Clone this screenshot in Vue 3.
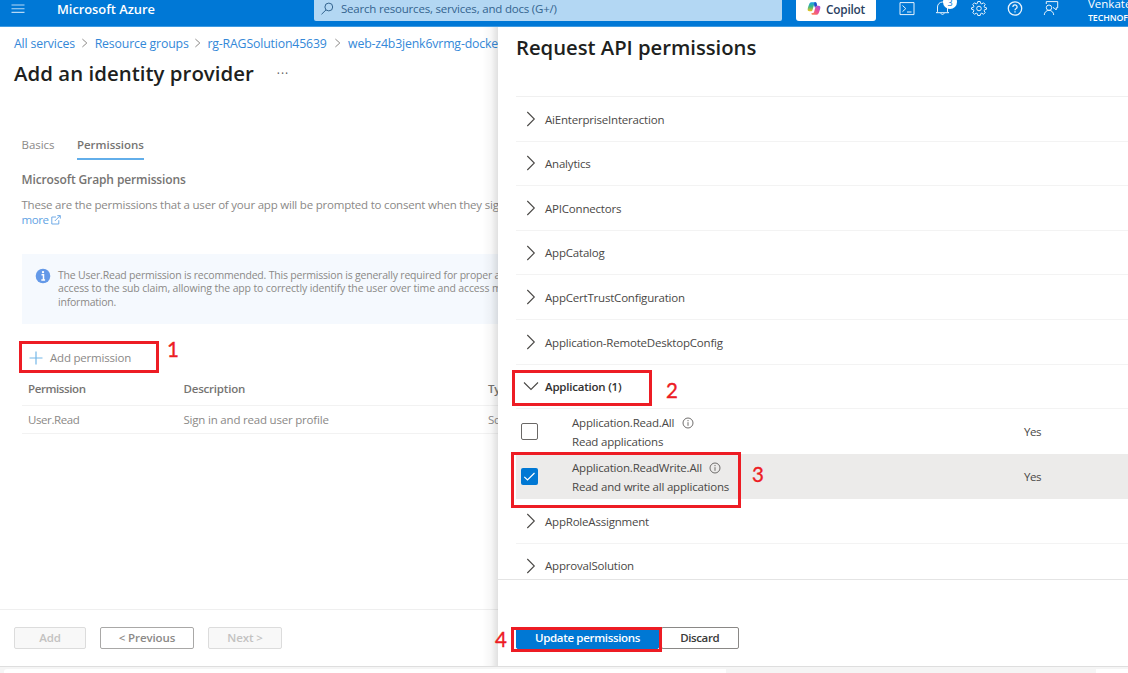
<script setup>
const crumbs = ['All services', 'Resource groups', 'rg-RAGSolution45639', 'web-z4b3jenk6vrmg-docker']
const before = ['AiEnterpriseInteraction', 'Analytics', 'APIConnectors', 'AppCatalog', 'AppCertTrustConfiguration', 'Application-RemoteDesktopConfig']
const after = ['AppRoleAssignment', 'ApprovalSolution']
const scopes = [
  { name: 'Application.Read.All', desc: 'Read applications', on: false },
  { name: 'Application.ReadWrite.All', desc: 'Read and write all applications', on: true },
]
</script>

<template>
  <div class="portal">
    <header class="bar">
      <svg class="burger" width="14" height="10" viewBox="0 0 14 10"><path d="M.5 1h13M.5 4.700h13M.5 8.400h13" /></svg>
      <div class="brand">Microsoft Azure</div>
      <div class="search">
        <svg width="14" height="14" viewBox="0 0 14 14"><circle cx="7.800" cy="5" r="3.900" /><path d="M5 7.900 .5 12.300" /></svg>
        <span>Search resources, services, and docs (G+/)</span>
      </div>
      <div class="copilot">
        <svg width="14" height="13" viewBox="0 0 14 13">
          <defs>
            <linearGradient id="cpa" x1="0" y1="0" x2="0" y2="1"><stop offset="0" stop-color="#18a0e8" /><stop offset=".5" stop-color="#42b883" /><stop offset="1" stop-color="#f5c518" /></linearGradient>
            <linearGradient id="cpb" x1="1" y1="0" x2="0" y2="1"><stop offset="0" stop-color="#9a55ee" /><stop offset=".5" stop-color="#ee5090" /><stop offset="1" stop-color="#ff8a45" /></linearGradient>
          </defs>
          <path d="M9.800 1.400C9.500.5 9 .2 8.200.2H4.400C2.800.2 2.300 1.600 1.500 4 .7 6.300-.3 9.300 2.400 9.300h1.400c1 0 1.500-.6 1.800-1.600l1.200-4.100c.3-1.100.8-1.600 1.700-1.600z" fill="url(#cpa)" />
          <path d="M4.200 11.600c.3.9.8 1.200 1.600 1.200h3.800c1.600 0 2.100-1.400 2.900-3.800.8-2.300 1.800-5.300-.9-5.300h-1.400c-1 0-1.500.6-1.800 1.600L7.200 9.400C6.900 10.500 6.400 11 5.500 11z" fill="url(#cpb)" />
          <path d="M7.500.2c1.500 0 2 .6 2.300 1.700l.4 1.800C8.700 3.700 8.500 5 8.100 6L7 3z" fill="#1c50c8" />
        </svg>
        <span>Copilot</span>
      </div>
      <div class="tools">
        <svg width="16" height="20" viewBox="0 0 16 20"><path d="M1 2.600h14v12H1zM3.500 5.500l3.300 3.100-3.300 3.100M8 12h4.500" /></svg>
        <div class="bell">
          <svg width="16" height="20" viewBox="0 0 16 20"><path d="M2.500 11.800V7a5 5 0 0 1 10 0v4.800l1.300.9H1.200zM5.800 13.200a1.800 1.800 0 0 0 3.400 0" /></svg>
          <span class="badge">3</span>
        </div>
        <svg width="16" height="20" viewBox="0 0 16 20"><circle cx="8" cy="8.500" r="2.300" /><path d="M6.800 1.500h2.400l.4 1.900 1.200.5 1.700-1.100 1.700 1.700-1.100 1.700.5 1.200 1.900.4v1.400l-1.900.5-.5 1.200 1.100 1.700-1.700 1.700-1.700-1.100-1.200.5-.4 1.800H6.800l-.4-1.800-1.200-.5-1.700 1.100-1.700-1.700 1.100-1.700-.5-1.200L.5 9.200V7.800l1.900-.4.5-1.200-1.100-1.700 1.700-1.700 1.700 1.100 1.200-.5z" /></svg>
        <svg width="16" height="20" viewBox="0 0 16 20"><circle cx="8" cy="8.500" r="6.700" stroke-width="1.300" /><path d="M5.900 6.900a2.100 2 0 1 1 3.300 1.600C8.400 9 8 9.300 8 10.200M8 11.300v1.200" stroke-width="1.300" /></svg>
        <svg width="16" height="20" viewBox="0 0 16 20"><circle cx="6" cy="7.700" r="2.700" /><path d="M1.300 15a4.700 4.700 0 0 1 9.400 0M3.300 4V1.600h11.400v6.200h-1.500v2.200l-2.200-2.200H10" /></svg>
      </div>
      <div class="account"><div class="user">Venkatesh</div><div class="org">TECHNOFORTE</div></div>
    </header>

    <div class="stage">
      <main class="page">
        <nav class="crumbs">
          <template v-for="(c, i) in crumbs" :key="c">
            <svg v-if="i" width="19.700" height="10" viewBox="0 0 20 10"><path d="m7.500 1 4.500 4-4.500 4" /></svg>
            <a :class="'crumb c' + i">{{ c }}</a>
          </template>
        </nav>
        <div class="heading"><h1>Add an identity provider</h1><span>···</span></div>
        <div class="form">
          <div class="tabs"><span class="tab">Basics</span><span class="tab on">Permissions</span></div>
          <h2>Microsoft Graph permissions</h2>
          <p class="lead">These are the permissions that a user of your app will be prompted to consent when they sign<br /><a>more <svg width="10" height="10" viewBox="0 0 10 10"><path d="M5 2H.8v7h7V5.200M3.800 6 9 .8M6.300.6h3v3" /></svg></a></p>
          <div class="note">
            <svg width="16" height="16" viewBox="0 0 16 16"><circle cx="8" cy="8" r="7.300" fill="#6499e8" /><path d="M6.500 6.700h2v5M6.300 11.900h3.800" stroke="#fff" stroke-width="1.500" fill="none" /><circle cx="8" cy="4.100" r="1.200" fill="#fff" /></svg>
            <p><span class="l1">The User.Read permission is recommended. This permission is generally required for proper app</span><br /><span class="l2">access to the sub claim, allowing the app to correctly identify the user over time and access more</span><br /><span class="tight">information.</span></p>
          </div>
          <div class="add"><svg width="14" height="14" viewBox="0 0 14 14"><path d="M7 .5v13M.5 7h13" /></svg><span>Add permission</span></div>
          <div class="grid head"><span class="first">Permission</span><span>Description</span><span>Type</span></div>
          <div class="grid row"><span class="ur">User.Read</span><span>Sign in and read user profile</span><span>Scope</span></div>
        </div>
        <footer class="pagefoot"><div class="btn off w1">Add</div><div class="btn w2">&lt; Previous</div><div class="btn off w3">Next &gt;</div></footer>
      </main>

      <aside class="panel">
        <h1>Request API permissions</h1>
        <div class="list">
          <div v-for="g in before" :key="g" class="group"><svg width="16" height="16" viewBox="0 0 16 16"><path d="m4.300 1 7 7-7 7" /></svg><span>{{ g }}</span></div>
          <div class="group open"><svg width="16" height="16" viewBox="0 0 16 16"><path d="m1 4.500 7 7 7-7" /></svg><span>Application (1)</span></div>
          <div v-for="s in scopes" :key="s.name" class="scope" :class="{ sel: s.on }">
            <div class="check"><svg v-if="s.on" width="17" height="17" viewBox="0 0 17 17"><path d="m3.300 8.800 3.200 3.200 7-7" /></svg></div>
            <div class="info">
              <div class="name"><span>{{ s.name }}</span><svg width="12" height="12" viewBox="0 0 12 12"><circle cx="6" cy="6" r="5" /><path d="M6 5.200v3.600M6 3v1.200" /></svg></div>
              <div>{{ s.desc }}</div>
            </div>
            <div class="yes">Yes</div>
          </div>
          <div v-for="g in after" :key="g" class="group"><svg width="16" height="16" viewBox="0 0 16 16"><path d="m4.300 1 7 7-7 7" /></svg><span>{{ g }}</span></div>
        </div>
        <footer class="panelfoot"><div class="btn primary">Update permissions</div><div class="btn discard">Discard</div></footer>
      </aside>
    </div>
    <div class="strip"><div class="a"></div><div class="b"></div><div class="c"></div></div>

    <div class="mark m1"></div><div class="num n1">1</div>
    <div class="mark m2"></div><div class="num n2">2</div>
    <div class="mark m3"></div><div class="num n3">3</div>
    <div class="mark m4"></div><div class="num n4">4</div>
  </div>
</template>

<style>
body { overflow: hidden; }
</style>
<style scoped>
* { box-sizing: border-box; }
h1, h2, p { margin: 0; }
svg { display: block; flex: none; fill: none; }
.portal { position: relative; width: 1128px; height: 673px; overflow: hidden; background: #fff; font: 400 11.5px/16px "Open Sans", "Noto Sans", sans-serif; letter-spacing: -.2px; color: #4a4846; white-space: nowrap; display: flex; flex-direction: column; }

.bar { height: 27px; flex: none; display: flex; align-items: flex-start; background: #0078d6; border-bottom: 1px solid #3f9be2; color: #fff; overflow: hidden; }
.burger { margin: 4px 0 0 11px; stroke: #b5d8f5; stroke-width: 1.100; }
.brand { margin: 1px 0 0 32px; width: 257px; font-size: 12.9px; font-weight: 600; letter-spacing: -.04px; }
.search { width: 468px; height: 21px; background: #b3d7f3; border-radius: 0 0 2px 2px; display: flex; color: #33648f; line-height: 17px; }
.search svg { margin: 2px 6px 0 7px; stroke: #33648f; stroke-width: 1; }
.copilot { margin-left: 14px; width: 80px; height: 21px; background: #fff; border-radius: 0 0 3px 3px; display: flex; color: #2a3f5f; line-height: 18px; font-size: 11.8px; font-weight: 600; }
.copilot svg { margin: 2px 5px 0 11px; }
.tools { margin-left: 23px; display: flex; gap: 20px; }
.tools svg { stroke: #e8f3fc; stroke-width: 1; stroke-linejoin: round; }
.bell { position: relative; }
.badge { position: absolute; left: 8px; top: -5px; width: 14px; height: 14px; border-radius: 7px; background: #fff; color: #0078d4; font-size: 9px; line-height: 15px; text-align: center; letter-spacing: 0; }
.account { margin-left: 29px; margin-top: -4px; width: 40px; overflow: hidden; }
.user { height: 15px; letter-spacing: 0; }
.org { font-size: 8.8px; font-weight: 600; line-height: 14px; letter-spacing: -.1px; }

.stage { flex: none; height: 640px; display: flex; border-bottom: 1px solid #dedede; }
.page { position: relative; width: 498px; overflow: hidden; display: flex; flex-direction: column; }
.page::after { content: ""; position: absolute; right: 0; top: 0; bottom: 0; width: 16px; background: linear-gradient(to right, rgba(0,0,0,0), rgba(0,0,0,.03) 55%, rgba(0,0,0,.12)); }
.crumbs { height: 32px; padding-left: 14px; display: flex; align-items: center; font-size: 12.3px; letter-spacing: -.16px; color: #3488d8; }
.crumb { flex: none; margin-top: 1px; }
.c0 { width: 61px; } .c1 { width: 93px; } .c2 { width: 121px; }
.crumbs svg { stroke: #8a8886; }
.heading { height: 28px; padding-left: 14px; display: flex; align-items: center; color: #1f1e1d; }
h1 { font-size: 20.4px; font-weight: 600; line-height: 28px; letter-spacing: .03px; color: #201f1e; }
.heading h1 { margin-top: -1px; }
.heading span { margin: 1px 0 0 23px; letter-spacing: .9px; font-size: 12px; color: #605e5c; }
.form { padding: 48px 0 0 22px; height: 522px; color: #8b8987; flex: none; }
.tabs { display: flex; gap: 22.500px; margin-left: -.5px; }
.tab { height: 25px; line-height: 19px; letter-spacing: -.05px; }
.tab.on { width: 67px; font-weight: 600; color: #767472; border-bottom: 2px solid #62aeea; letter-spacing: -.02px; }
h2 { margin: 12px 0 0 -.5px; font-size: 12px; font-weight: 600; line-height: 16px; color: #767472; letter-spacing: -.12px; }
.lead { margin: 9px 0 0 -.5px; line-height: 15px; letter-spacing: -.21px; }
.lead a { display: flex; align-items: center; gap: 2px; color: #62a3e4; letter-spacing: -.4px; }
.lead svg { stroke: #62a3e4; stroke-width: .9; }
.note { margin-top: 26.500px; height: 70px; background: #f5f9fe; padding: 14px 0 0 13px; display: flex; font-size: 10.5px; line-height: 13.600px; letter-spacing: -.165px; }
.note p { margin: 1px 0 0 7px; }
.l1 { letter-spacing: -.2px; }
.l2 { letter-spacing: -.14px; }
.tight { letter-spacing: -.22px; }
.add { margin-top: 19.500px; height: 30px; padding-left: 7px; display: flex; align-items: center; }
.add span { margin-left: 7px; }
.add svg { stroke: #74b7e8; stroke-width: 1.200; }
.grid { display: grid; grid-template-columns: 155.500px 304.500px 60px; padding-left: 6px; border-bottom: 1px solid #f2f2f2; }
.head { margin-top: 1px; height: 32px; line-height: 30px; font-weight: 600; color: #767472; }
.head .first { letter-spacing: -.4px; }
.row { height: 28px; line-height: 28px; }
.ur { letter-spacing: -.4px; }
.pagefoot { height: 57px; border-top: 1px solid #efefef; padding: 17px 0 0 14px; display: flex; gap: 14px; }
.btn { height: 22px; line-height: 19px; border: 1px solid #a9a8a7; border-radius: 2px; text-align: center; font-weight: 600; color: #8b8987; letter-spacing: -.1px; }
.btn.off { background: #f8f8f8; border-color: #dcdcdc; color: #c3c2c1; }
.w1 { width: 72px; } .w2 { width: 94px; } .w3 { width: 74px; }

.panel { width: 630px; padding-left: 18px; display: flex; flex-direction: column; background: #fff; position: relative; }
.panel h1 { height: 69px; line-height: 40px; letter-spacing: -.03px; font-size: 20.300px; }
.list { height: 483px; overflow: hidden; border-top: 1px solid #f0f0f0; flex: none; }
.group { height: 44.600px; border-bottom: 1px solid #f3f3f3; padding-left: 7px; display: flex; align-items: center; }
.group svg { stroke: #4a4846; stroke-width: 1.100; }
.group span { margin: 1.500px 0 0 6px; }
.open { font-weight: 600; color: #323130; }
.open span { letter-spacing: -.22px; }
.scope { height: 45px; padding-left: 5px; display: flex; align-items: center; }
.sel { background: #ecebea; }
.check { width: 17px; height: 17px; border: 1px solid #6a6866; border-radius: 2px; background: #fff; }
.sel .check { border: 0; background: #0078d4; }
.check svg { stroke: #fff; stroke-width: 1.200; }
.info { margin-left: 34px; width: 452px; line-height: 19px; }
.name { display: flex; align-items: center; }
.name svg { margin: 1px 0 0 7.500px; stroke: #605e5c; stroke-width: .9; }
.yes { letter-spacing: -.4px; }
.panelfoot { margin-left: -18px; padding: 47px 0 0 18px; flex: 1; border-top: 1px solid #e4e4e4; display: flex; gap: 2px; }
.primary { width: 143px; background: #0078d4; border-color: #0078d4; color: #fff; letter-spacing: -.33px; }
.discard { width: 77.500px; color: #3a3938; border-color: #8a8886; letter-spacing: -.39px; }
.strip { flex: 1; display: flex; padding: 2px 0 0 4px; background: #f5f5f5; }
.a { width: 722px; background: #fff; border-radius: 3px 0 0 0; } .b { width: 370px; } .c { flex: 1; background: #fff; }

/* callout overlay */
.mark { position: absolute; border: 3px solid #ed1c24; }
.m1 { left: 19px; top: 341px; width: 140px; height: 32px; }
.m2 { left: 512px; top: 370px; width: 140px; height: 36px; }
.m3 { left: 511px; top: 452px; width: 230px; height: 56px; }
.m4 { left: 511px; top: 627px; width: 151px; height: 25px; }
.num { position: absolute; font: 400 20.500px/24px Lato, sans-serif; letter-spacing: 0; color: #ed1c24; -webkit-text-stroke: .35px #ed1c24; }
.n1 { left: 167px; top: 337px; } .n2 { left: 666px; top: 378px; } .n3 { left: 752px; top: 462px; } .n4 { left: 495px; top: 627px; }
</style>
